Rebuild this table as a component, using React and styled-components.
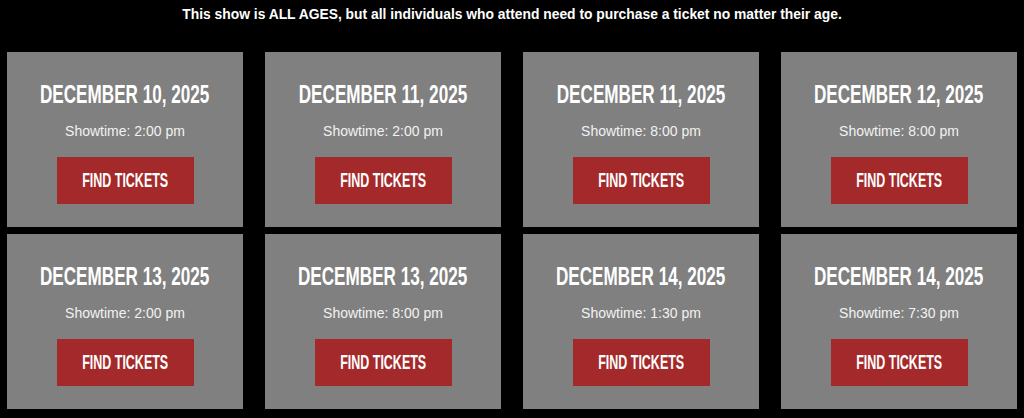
import React from "react"
import styled, { createGlobalStyle } from "styled-components"

const GlobalStyle = createGlobalStyle`
  html, body {
    margin: 0;
    padding: 0;
    background: #000;
  }
`;

const Page = styled.div`
  background: #000;
  padding: 6px 7px 9px;
  font-family: "Liberation Sans", Arial, sans-serif;
`;

const Notice = styled.p`
  margin: 0 0 30px;
  color: #fff;
  font-weight: bold;
  font-size: 13.85px;
  line-height: 16px;
  text-align: center;
`;

const Grid = styled.div`
  display: grid;
  grid-template-columns: repeat(4, minmax(0, 1fr));
  column-gap: 22px;
  row-gap: 7px;
`;

const Card = styled.div`
  height: 175px;
  box-sizing: border-box;
  padding-top: 27px;
  background: #808080;
  display: flex;
  flex-direction: column;
  align-items: center;
`;

/* no condensed display face installed, so squeeze a bold sans */
const Condensed = styled.span`
  display: inline-block;
  white-space: nowrap;
  transform: scaleX(${p => p.$scale});
`;

const DateTitle = styled.h2`
  margin: 0;
  color: #fff;
  font-family: "Liberation Sans", Arial, sans-serif;
  font-weight: bold;
  font-size: 25px;
  line-height: 30px;
  white-space: nowrap;
`;

const Showtime = styled.div`
  margin-top: 14px;
  color: #f2f2f2;
  font-size: 14px;
  line-height: 16px;
`;

const TicketButton = styled.a`
  margin-top: 18px;
  width: 137px;
  height: 47px;
  display: flex;
  align-items: center;
  justify-content: center;
  background: #a4292a;
  color: #fff;
  text-decoration: none;
  font-weight: bold;
  font-size: 19.5px;
  cursor: pointer;
`;

const shows = [
  { date: "DECEMBER 10, 2025", time: "2:00 pm" },
  { date: "DECEMBER 11, 2025", time: "2:00 pm" },
  { date: "DECEMBER 11, 2025", time: "8:00 pm" },
  { date: "DECEMBER 12, 2025", time: "8:00 pm" },
  { date: "DECEMBER 13, 2025", time: "2:00 pm" },
  { date: "DECEMBER 13, 2025", time: "8:00 pm" },
  { date: "DECEMBER 14, 2025", time: "1:30 pm" },
  { date: "DECEMBER 14, 2025", time: "7:30 pm" },
];

const App = () => {
  return (
    <Page>
      <GlobalStyle />
      <Notice>
        This show is ALL AGES, but all individuals who attend need to purchase a ticket no matter their age.
      </Notice>
      <Grid>
        {shows.map((show, i) => (
          <Card key={i}>
            <DateTitle>
              <Condensed $scale={0.685}>{show.date}</Condensed>
            </DateTitle>
            <Showtime>Showtime: {show.time}</Showtime>
            <TicketButton>
              <Condensed $scale={0.64}>FIND TICKETS</Condensed>
            </TicketButton>
          </Card>
        ))}
      </Grid>
    </Page>
  )
}

export default App
